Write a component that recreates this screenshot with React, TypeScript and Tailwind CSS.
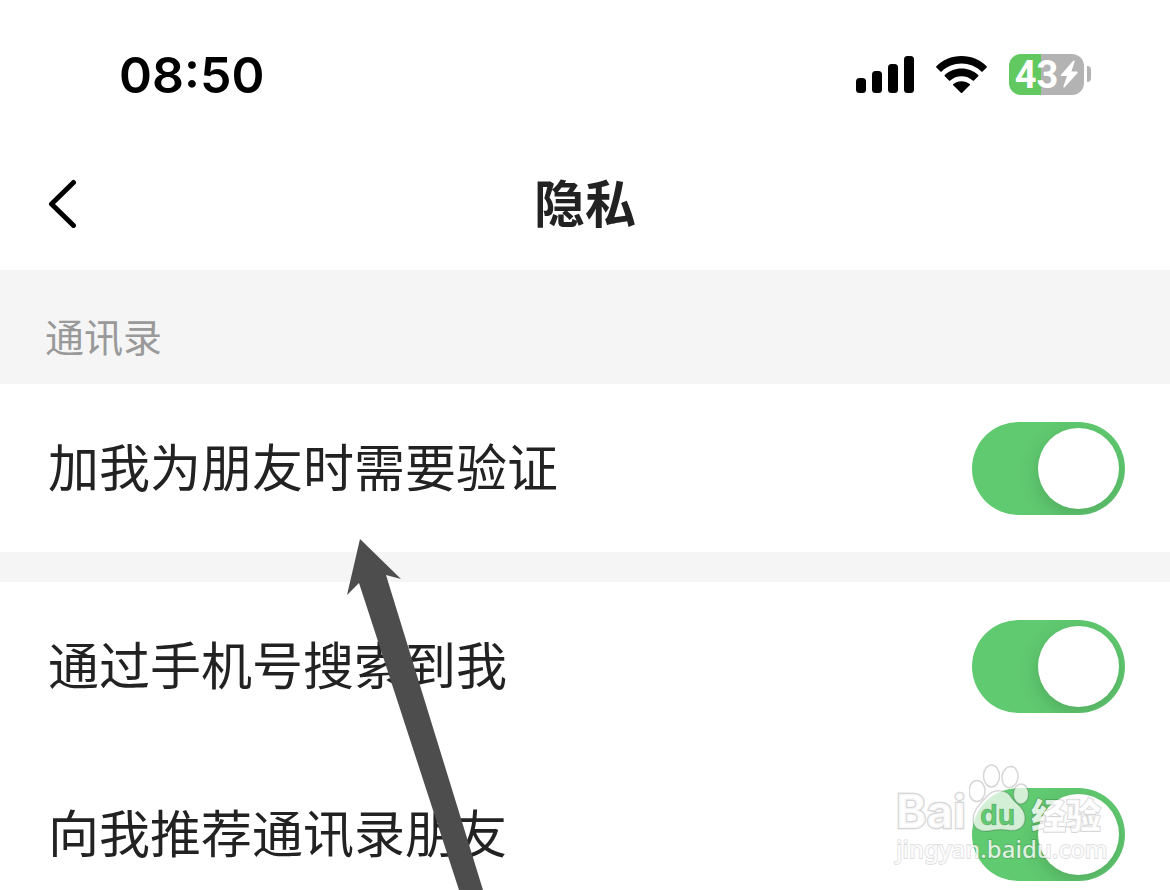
import { useState } from "react";

type Setting = {
  id: string;
  label: string;
};

// 每一组之间用灰色间隔条分开
const groups: Setting[][] = [
  [{ id: "verify", label: "加我为朋友时需要验证" }],
  [
    { id: "phone", label: "通过手机号搜索到我" },
    { id: "recommend", label: "向我推荐通讯录朋友" },
  ],
];

function StatusBar() {
  return (
    <div className="flex h-[136px] items-center justify-between pt-3 pr-[79px] pl-[119px]">
      <time className="pt-0.5 font-['Inter',sans-serif] text-[50px] leading-[52px] font-semibold">
        08:50
      </time>
      <div className="flex items-center gap-[22px]">
        <svg width="58" height="37" viewBox="0 0 58 37" aria-label="信号">
          <rect x="0" y="22" width="10" height="15" rx="3.500" />
          <rect x="16" y="15" width="10" height="22" rx="3.500" />
          <rect x="32" y="8" width="10" height="29" rx="3.500" />
          <rect x="48" y="0" width="10" height="37" rx="3.500" />
        </svg>
        <svg width="51" height="37" viewBox="0 0 51 37" aria-label="Wi-Fi">
          <path d="M25.500 0C35.500 0 44.500 4 50.600 10.200Q51.200 10.900 50.600 11.500L46.600 15.500Q46 16 45.300 15.400C40 10.500 33 7.600 25.500 7.600S11 10.500 5.700 15.400Q5 16 4.400 15.500L.4 11.500Q-.2 10.900.4 10.200C6.500 4 15.500 0 25.500 0Z" />
          <path d="M25.500 12.600C32 12.600 37.800 15 42.200 19.100Q42.800 19.700 42.200 20.300L38 24.400Q37.400 25 36.700 24.400C33.700 21.800 29.800 20.200 25.500 20.200S17.300 21.800 14.300 24.400Q13.600 25 13 24.400L8.800 20.300Q8.200 19.700 8.800 19.100C13.200 15 19 12.600 25.500 12.600Z" />
          <path d="M25.500 25.200C28.600 25.200 31.500 26.300 33.700 28.100Q34.300 28.700 33.700 29.300L26.200 36.700Q25.500 37.300 24.800 36.700L17.300 29.300Q16.700 28.700 17.300 28.100C19.500 26.300 22.400 25.200 25.500 25.200Z" />
        </svg>
        <div className="flex items-center gap-[3px]">
          <div className="flex h-[41px] w-[75px] items-center justify-center gap-0.5 rounded-xl bg-linear-to-r from-[#62c960] from-[43%] to-[#b3b3b3] to-[43%] text-white">
            <span className="pt-0.5 font-['Roboto',sans-serif] text-[38px] leading-none font-bold">
              43
            </span>
            <svg width="18" height="28" viewBox="0 0 18 28" fill="currentColor">
              <path d="M13.500.6 1 14.700Q.3 16 1.800 16H7L3.400 26.600Q3.400 28 4.700 27.200L17.500 12.900Q18.300 11.500 16.800 11.500H11.400L14.700 1.500Q14.700 0 13.500.6Z" />
            </svg>
          </div>
          <div className="h-4 w-1 rounded-r-full bg-[#b3b3b3]" />
        </div>
      </div>
    </div>
  );
}

function NavBar() {
  return (
    <header className="grid h-[134px] grid-cols-[1fr_auto_1fr] items-center px-12">
      <button type="button" aria-label="返回" className="w-8">
        <svg
          width="30"
          height="50"
          viewBox="0 0 30 50"
          fill="none"
          stroke="black"
          strokeWidth="5"
          strokeLinecap="round"
          strokeLinejoin="round"
        >
          <path d="M25.500 4.500 3.500 26l22 21.500" />
        </svg>
      </button>
      <h1 className="pb-1 text-[51px] leading-none font-bold">隐私</h1>
    </header>
  );
}

function SettingRow({ id, label }: Setting) {
  const [checked, setChecked] = useState(true);

  return (
    <li className="flex h-[168px] items-center justify-between bg-white pr-[45px] pl-12">
      <label htmlFor={id} className="pb-1.5 text-[51px] leading-none">
        {label}
      </label>
      <input
        id={id}
        type="checkbox"
        role="switch"
        checked={checked}
        onChange={e => setChecked(e.target.checked)}
        className="flex h-[93px] w-[153px] shrink-0 cursor-pointer appearance-none items-center overflow-hidden rounded-full bg-[#e5e5e5] p-1.5 before:size-[81px] before:rounded-full before:bg-white before:shadow-[0_6px_20px_rgba(0,0,0,0.16)] checked:justify-end checked:bg-[#60ca70]"
      />
    </li>
  );
}

function Arrow() {
  return (
    <svg
      className="pointer-events-none absolute top-[539px] left-[347px]"
      width="140"
      height="351"
      viewBox="0 0 140 351"
      fill="#4d4d4d"
    >
      <path d="M13 0 54 40 39 36 136 351H112L12 44 0 56Z" />
    </svg>
  );
}

function Watermark() {
  return (
    <div className="pointer-events-none absolute top-[764px] right-[62px] w-[212px] text-white/80">
      <div className="flex h-[68px] items-end">
        <span className="w-[73px] font-['Inter',sans-serif] text-[46px] leading-[42px] font-bold [-webkit-text-stroke:3px_rgba(0,0,0,0.16)] [paint-order:stroke_fill]">
          Bai
        </span>
        <svg
          width="62"
          height="68"
          viewBox="0 0 62 68"
          fill="rgba(255,255,255,0.72)"
          stroke="rgba(0,0,0,0.16)"
          strokeWidth="1.500"
        >
          <ellipse cx="8" cy="27" rx="8" ry="10.500" />
          <ellipse cx="22.500" cy="12" rx="8" ry="11" />
          <ellipse cx="41" cy="13" rx="8" ry="10.500" transform="rotate(8 41 13)" />
          <ellipse cx="52" cy="30" rx="7.500" ry="10" />
          <path d="M18 32C25 25 37 25 42 33 46 40 56 43 56 54 56 64 48 68 38 66Q32 65 25 66C14 69 4 66 4 56 4 45 12 40 18 32Z" />
          <text
            x="11"
            y="61"
            fill="#60ca70"
            strokeWidth="1"
            className="font-['Inter',sans-serif] text-[28px] font-bold"
          >
            du
          </text>
        </svg>
        <span className="text-[35px] leading-[36px] font-black [-webkit-text-stroke:2px_rgba(0,0,0,0.16)] [paint-order:stroke_fill]">
          经验
        </span>
      </div>
      <div className="font-['Noto_Sans',sans-serif] text-[24px] leading-[33px] font-medium [-webkit-text-stroke:2px_rgba(0,0,0,0.12)] [paint-order:stroke_fill]">
        jingyan.baidu.com
      </div>
    </div>
  );
}

export default function App() {
  return (
    <div className="relative h-screen overflow-hidden bg-white font-['Noto_Sans_CJK_SC',sans-serif] text-[#222]">
      <div className="text-black">
        <StatusBar />
      </div>
      <NavBar />
      <main className="bg-[#f5f5f5]">
        <h2 className="flex h-[114px] items-center px-[45px] pt-4 text-[39px] leading-none text-[#999]">
          通讯录
        </h2>
        <div className="flex flex-col gap-[30px]">
          {groups.map((group, i) => (
            <ul key={i}>
              {group.map(item => (
                <SettingRow key={item.id} {...item} />
              ))}
            </ul>
          ))}
        </div>
      </main>
      <Arrow />
      <Watermark />
    </div>
  );
}
